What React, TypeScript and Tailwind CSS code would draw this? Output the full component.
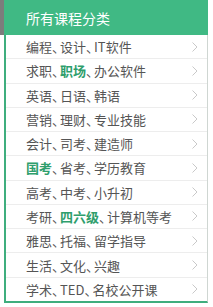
import React from 'react';

type Part = { text: string; hot?: boolean };

const rows: Part[][] = [
  [{ text: '编程、设计、IT软件' }],
  [{ text: '求职、' }, { text: '职场', hot: true }, { text: '、办公软件' }],
  [{ text: '英语、日语、韩语' }],
  [{ text: '营销、理财、专业技能' }],
  [{ text: '会计、司考、建造师' }],
  [{ text: '国考', hot: true }, { text: '、省考、学历教育' }],
  [{ text: '高考、中考、小升初' }],
  [{ text: '考研、' }, { text: '四六级', hot: true }, { text: '、计算机等考' }],
  [{ text: '雅思、托福、留学指导' }],
  [{ text: '生活、文化、兴趣' }],
  [{ text: '学术、TED、名校公开课' }],
];

// the enumeration comma is narrower in the original font
function Narrow({ text }: { text: string }) {
  const bits = text.split('、');
  return (
    <>
      {bits.map((b, k) => (
        <React.Fragment key={k}>
          {k > 0 && <span className="tracking-[-5px]">、</span>}
          {b}
        </React.Fragment>
      ))}
    </>
  );
}

function Chevron() {
  return (
    <svg width="6" height="10" viewBox="0 0 6 10" className="shrink-0">
      <polyline points="0.5,0.5 5,5 0.5,9.5" fill="none" stroke="#c9c9c9" strokeWidth="1" />
    </svg>
  );
}

export default function App() {
  return (
    <div
      className="w-[213px] h-[307px] bg-white flex overflow-hidden"
      style={{ fontFamily: '"Noto Sans CJK SC", "Noto Sans", sans-serif' }}
    >
      <div className="w-[4px] shrink-0">
        <div className="h-[35px] bg-[#7c7c7c]" />
      </div>
      <div className="w-[204px] shrink-0 flex flex-col">
        <div className="h-[35px] bg-[#40b984] flex items-center pl-[22px] text-white text-[14px] leading-none">
          所有课程分类
        </div>
        <div className="h-[268px] flex flex-col border-l-2 border-b-2 border-r border-l-[#3fae7e] border-b-[#3fae7e] border-r-[#cfd6d2]">
          {rows.map((parts, i) => (
            <div
              key={i}
              className={`flex-1 flex items-center justify-between pl-[20px] pr-[9px] text-[13px] text-[#555] ${
                i > 0 ? 'border-t border-[#ededed]' : ''
              }`}
            >
              <span className="leading-none whitespace-nowrap">
                {parts.map((p, j) => (
                  <span key={j} className={p.hot ? 'font-bold text-[#2e9e6c]' : ''}>
                    <Narrow text={p.text} />
                  </span>
                ))}
              </span>
              <Chevron />
            </div>
          ))}
        </div>
      </div>
    </div>
  );
}
